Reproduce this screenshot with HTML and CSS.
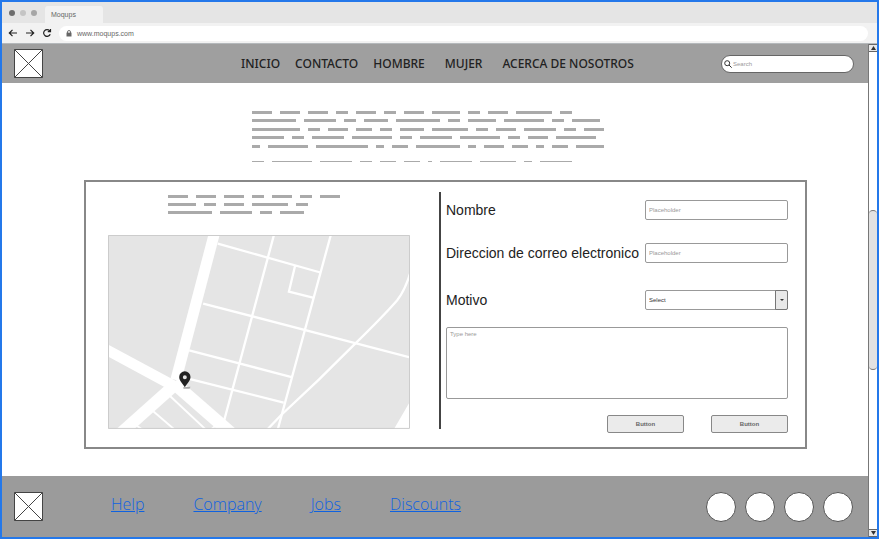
FILE: index.html
```html
<!DOCTYPE html>
<html lang="es">
<head>
<meta charset="utf-8">
<meta name="viewport" content="width=device-width, initial-scale=1">
<title>Moqups</title>
<link rel="stylesheet" href="styles.css">
</head>
<body>
<div class="browser">
  <div class="tabs">
    <span class="dot dot-dark"></span>
    <span class="dot"></span>
    <span class="dot dot-mid"></span>
    <span class="tab">Moqups</span>
  </div>
  <div class="toolbar">
    <svg class="tool" viewBox="0 0 10 10"><path d="M9 5H1.500M4.500 1.800L1.300 5l3.200 3.200"/></svg>
    <svg class="tool" viewBox="0 0 10 10"><path d="M1 5h7.500M5.500 1.800L8.700 5 5.500 8.200"/></svg>
    <svg class="tool" viewBox="0 0 10 10"><path d="M8.200 6.200A3.400 3.400 0 1 1 7.600 2.700L8.300 3.500M8.500 1v2.700H5.800"/></svg>
    <div class="address">
      <svg class="lock" viewBox="0 0 6 7"><path d="M1.500 3V2a1.500 1.500 0 0 1 3 0v1" fill="none" stroke="#666" stroke-width=".9"/><path d="M.5 2.600h5V6.500h-5z" fill="#666"/></svg>
      <span>www.moqups.com</span>
    </div>
  </div>

  <div class="viewport">
    <div class="page">
      <header class="header">
        <svg class="image-box" viewBox="0 0 29 29"><path d="M.5.5h28v28H.5zM.5.5l28 28M28.500.5L.5 28.500"/></svg>
        <nav class="nav">
          <a href="#">INICIO</a>
          <a href="#">CONTACTO</a>
          <a href="#">HOMBRE</a>
          <a class="spaced" href="#">MUJER</a>
          <a class="spaced" href="#">ACERCA DE NOSOTROS</a>
        </nav>
        <label class="search">
          <svg class="lens" viewBox="0 0 8 8"><circle cx="3.200" cy="3.200" r="2.500"/><path d="M5 5l2.700 2.700"/></svg>
          <input type="search" placeholder="Search" aria-label="Search">
        </label>
      </header>

      <main class="main">
        <svg class="intro" viewBox="0 0 352 54">
          <path class="bars" d="M0 2.500h20m8 0h20m8 0h20m8 0h12m8 0h20m8 0h12m8 0h20m8 0h28m8 0h12m8 0h20m8 0h36m8 0h12
            M0 10.500h44m8 0h32m8 0h12m8 0h24m8 0h44m8 0h12m8 0h28m8 0h40m8 0h12m8 0h28
            M0 19.500h48m8 0h12m8 0h20m8 0h16m8 0h12m8 0h24m8 0h36m8 0h12m8 0h20m8 0h32m8 0h12m8 0h20
            M0 27.500h32m8 0h12m8 0h32m8 0h40m8 0h12m8 0h32m8 0h40m8 0h12m8 0h20m8 0h40
            M0 36.500h8m8 0h40m8 0h52m8 0h8m8 0h16m8 0h44m8 0h8m8 0h20m8 0h16m8 0h8m8 0h16m8 0h28"/>
          <path class="rule" d="M0 51.500h12m8 0h40m8 0h32m8 0h12m8 0h16m8 0h16m8 0h4m8 0h32m8 0h36m8 0h8m8 0h32"/>
        </svg>

        <section class="panel">
          <div class="location">
            <svg class="caption" viewBox="0 0 172 20">
              <path class="bars" d="M0 1.500h20m8 0h20m8 0h20m8 0h12m8 0h20m8 0h12m8 0h20
                M0 9.500h28m8 0h12m8 0h20m8 0h36m8 0h12
                M0 17.500h44m8 0h32m8 0h12m8 0h24"/>
            </svg>
            <svg class="map" viewBox="24 14 908 583">
              <path fill="#e5e5e5" d="M24 14h908v583H24z"/>
              <g fill="none" stroke="#fff">
                <path stroke-width="33" d="M345 5L228 450"/>
                <path stroke-width="32" d="M10 354L222 468"/>
                <path stroke-width="36" d="M228 462L60 612"/>
                <path stroke-width="38" d="M222 460L392 608"/>
                <path stroke-width="7" d="M354 40L660 126M310 220L932 382M268 361L576 441M262 445L552 518M524 10L371 580M695 10L534 600M587 104L568 184L640 202"/>
                <path stroke-width="7" d="M936 118Q918 180 893 211Q850 260 768 340Q660 450 544 556L500 602"/>
                <path stroke-width="6" d="M208 496L316 597M160 544L222 597M108 586L132 602M330 602L350 585"/>
              </g>
              <path fill="#fff" d="M932 515L884 597H932z"/>
              <path fill="none" stroke="#ccc" stroke-width="3" d="M25.500 15.500h905v580h-905z"/>
              <path fill="#aaa" d="M250 472l22-2-3 6h-18z"/>
              <path fill="#222" fill-rule="evenodd" d="M255 424a17 17 0 0 0-17 17c0 12 11 20 17 31 6-11 17-19 17-31a17 17 0 0 0-17-17zm0 12a6 6 0 1 1 0 12 6 6 0 0 1 0-12z"/>
            </svg>
          </div>

          <div class="divider"></div>

          <form class="form">
            <div class="field">
              <label for="name">Nombre</label>
              <input id="name" type="text" placeholder="Placeholder">
            </div>
            <div class="field">
              <label for="email">Direccion de correo electronico</label>
              <input id="email" type="text" placeholder="Placeholder">
            </div>
            <div class="field">
              <label for="reason">Motivo</label>
              <div class="select">
                <select id="reason"><option>Select</option></select>
                <span class="caret"></span>
              </div>
            </div>
            <textarea placeholder="Type here" aria-label="Mensaje"></textarea>
            <div class="actions">
              <button type="button">Button</button>
              <button type="button">Button</button>
            </div>
          </form>
        </section>
      </main>

      <footer class="footer">
        <svg class="image-box" viewBox="0 0 29 29"><path d="M.5.5h28v28H.5zM.5.5l28 28M28.500.5L.5 28.500"/></svg>
        <nav class="links">
          <a href="#">Help</a>
          <a href="#">Company</a>
          <a href="#">Jobs</a>
          <a href="#">Discounts</a>
        </nav>
        <div class="social">
          <span></span><span></span><span></span><span></span>
        </div>
      </footer>
    </div>

    <div class="scrollbar">
      <span class="step"><svg viewBox="0 0 5 4"><path d="M2.500 0L5 4H0z"/></svg></span>
      <span class="track"><span class="thumb"></span></span>
      <span class="step"><svg viewBox="0 0 5 4"><path d="M0 0h5L2.500 4z"/></svg></span>
    </div>
  </div>
</div>
</body>
</html>
```
FILE: styles.css
```css
* {
  box-sizing: border-box;
}

body {
  margin: 0;
  background: #fff;
  color: #222;
  font-family: "Liberation Sans", Arial, sans-serif;
}

input,
select,
textarea,
button {
  margin: 0;
  font-family: inherit;
  font-size: 6px;
  color: #333;
}

::placeholder {
  color: #999;
  opacity: 1;
}

.browser {
  display: flex;
  flex-direction: column;
  min-height: 100vh;
  border: 2px solid #2478ea;
}

/* Window chrome */
.tabs {
  display: flex;
  align-items: center;
  gap: 5px;
  height: 21px;
  padding-left: 7px;
  background: #e5e5e5;
}

.dot {
  width: 6px;
  height: 6px;
  border-radius: 50%;
  background: #c4c4c4;
}

.dot-dark {
  background: #6e6e6e;
}

.dot-mid {
  background: #a6a6a6;
}

.tab {
  align-self: flex-end;
  width: 58px;
  height: 17px;
  margin-left: 3px;
  padding-left: 6px;
  border-radius: 3px 3px 0 0;
  background: #f2f2f2;
  color: #666;
  font-size: 7px;
  line-height: 17px;
}

.toolbar {
  display: flex;
  align-items: center;
  gap: 7px;
  height: 21px;
  padding: 0 9px 0 6px;
  border-bottom: 1px solid #b4b8bb;
  background: #f2f2f2;
}

.tool {
  width: 10px;
  height: 10px;
  fill: none;
  stroke: #222;
  stroke-width: 1.2;
}

.address {
  display: flex;
  flex: 1;
  align-items: center;
  gap: 5px;
  height: 15px;
  padding-left: 7px;
  border-radius: 8px;
  background: #fff;
  color: #666;
  font-size: 7px;
}

.lock {
  width: 6px;
  height: 7px;
}

.viewport {
  display: flex;
  flex: 1;
}

.page {
  display: flex;
  flex: 1;
  flex-direction: column;
}

/* Header */
.header {
  display: flex;
  align-items: center;
  height: 39px;
  padding: 0 14px 0 12px;
  background: #9f9f9f;
}

.image-box {
  width: 29px;
  height: 29px;
  fill: #fff;
  stroke: #444;
  stroke-width: 1;
}

.nav {
  display: flex;
  flex: 1;
  gap: 15px;
  margin-left: 198px;
  font-family: "Noto Sans", sans-serif;
  font-size: 12px;
  font-weight: 500;
}

.nav a {
  color: #222;
  text-decoration: none;
}

.nav .spaced {
  margin-left: 5px;
}

.search {
  display: flex;
  align-items: center;
  gap: 1px;
  width: 133px;
  height: 18px;
  padding: 0 2px;
  border: 1px solid #666;
  border-radius: 9px;
  background: #fff;
}

.search input {
  flex: 1;
  min-width: 0;
  padding: 0;
  border: 0;
  outline: 0;
  background: none;
}

.lens {
  width: 8px;
  height: 8px;
  fill: none;
  stroke: #333;
  stroke-width: 1;
}

/* Body */
.main {
  display: flex;
  flex: 1;
  flex-direction: column;
  padding: 27px 61px 27px 82px;
}

.bars {
  fill: none;
  stroke: #aaa;
  stroke-width: 3;
}

.rule {
  fill: none;
  stroke: #aaa;
  stroke-width: 1;
}

.intro {
  width: 352px;
  height: 54px;
  margin-left: 168px;
}

.panel {
  display: grid;
  grid-template-columns: 353fr 2px 364fr;
  margin-top: 16px;
  border: 2px solid #888;
}

.location {
  padding: 13px 29px 18px 22px;
}

.caption {
  display: block;
  width: 172px;
  height: 20px;
  margin: 0 auto 20px 60px;
}

.map {
  display: block;
  width: 100%;
}

.divider {
  margin: 10px 0 18px;
  background: #444;
}

.form {
  display: flex;
  flex-direction: column;
  padding: 18px 17px 14px 5px;
}

.field {
  display: flex;
  align-items: center;
  justify-content: space-between;
  height: 20px;
  margin-bottom: 23px;
  font-size: 14px;
}

.field:nth-child(3) {
  margin: 4px 0 17px;
}

.field input,
.select {
  width: 143px;
  height: 20px;
}

.field input,
.select select,
.form textarea {
  padding: 0 3px;
  border: 1px solid #999;
  border-radius: 2px;
  background: #fff;
}

.select {
  position: relative;
}

.select select {
  display: block;
  width: 100%;
  height: 100%;
  appearance: none;
}

.caret {
  position: absolute;
  top: 0;
  right: 0;
  display: grid;
  place-items: center;
  width: 13px;
  height: 100%;
  border: 1px solid #777;
  border-radius: 0 2px 2px 0;
  background: #e8e8e8;
  pointer-events: none;
}

.caret::before {
  content: "";
  border: 2px solid transparent;
  border-top-color: #333;
  border-bottom: 0;
}

.form textarea {
  height: 72px;
  padding: 3px;
  resize: none;
}

.actions {
  display: flex;
  justify-content: flex-end;
  gap: 27px;
  margin-top: 16px;
}

.actions button {
  width: 77px;
  height: 18px;
  padding: 0;
  border: 1px solid #888;
  border-radius: 2px;
  background: #ebebeb;
  color: #666;
  font-weight: 700;
}

/* Footer */
.footer {
  display: flex;
  align-items: center;
  height: 61px;
  padding: 0 15px 0 12px;
  background: #9b9b9b;
}

.links {
  display: flex;
  flex: 1;
  gap: 49px;
  margin-left: 68px;
  padding-bottom: 5px;
  font-family: "Open Sans", sans-serif;
  font-size: 16px;
  font-weight: 300;
}

.links a {
  color: #0f62e0;
}

.social {
  display: flex;
  gap: 9px;
}

.social span {
  width: 30px;
  height: 30px;
  border: 1px solid #555;
  border-radius: 50%;
  background: #fff;
}

/* Scrollbar */
.scrollbar {
  display: flex;
  flex-direction: column;
  width: 9px;
  border-left: 1px solid #777;
}

.step {
  display: grid;
  place-items: center;
  height: 8px;
  border: solid #666;
  border-width: 1px 0;
  background: #e8e8e8;
}

.step svg {
  width: 5px;
  height: 4px;
  fill: #333;
}

.track {
  display: flex;
  flex: 1;
  flex-direction: column;
}

.track::before {
  content: "";
  flex: 159;
}

.track::after {
  content: "";
  flex: 160;
}

.thumb {
  flex: 159;
  border: solid #777;
  border-width: 1px 0;
  border-radius: 5px;
  background: #e2e2e2;
}
```
